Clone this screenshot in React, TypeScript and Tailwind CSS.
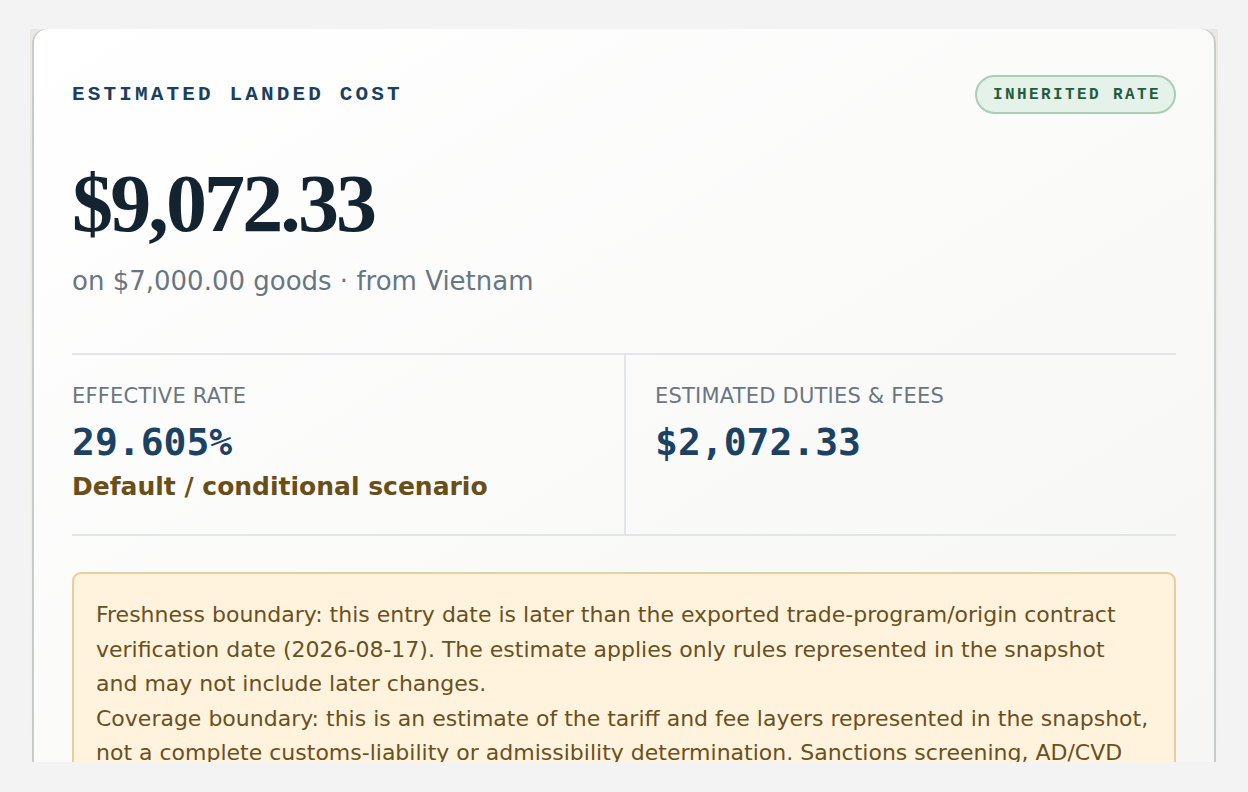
export default function App() {
  return (
    <div className="w-[1248px] h-[792px] bg-[#f2f3f2] pt-[29px] pl-[30px] overflow-hidden">
      <div className="w-[1188px] h-[733px] px-[2px] bg-linear-to-b from-[#ebe8e1] to-[#f2f3f2] overflow-hidden">
        <div className="h-full rounded-t-[14px] bg-linear-to-br from-white to-[#f6f6f5] shadow-[inset_2px_0_0_#c8cbcb,inset_-2px_0_0_#c8cbcb] px-[40px] pt-[46px] overflow-hidden">
          <div className="flex items-center justify-between h-[39px]">
            <div className="font-['Liberation_Mono',monospace] font-bold text-[21px] tracking-[0.15em] text-[#1b3f5e] leading-none">
              ESTIMATED LANDED COST
            </div>
            <div className="h-[39px] flex items-center rounded-full border-2 border-[#a9cdb7] bg-[#e5f2ea] pl-[16px] pr-[13px] font-['Liberation_Mono',monospace] font-bold text-[16px] tracking-[0.15em] text-[#245b40] leading-none">
              INHERITED RATE
            </div>
          </div>

          <div className="mt-[49px] font-['Liberation_Serif',serif] font-bold text-[82px] leading-none tracking-[-0.035em] text-[#13232f]">
            $9,072.33
          </div>
          <div className="mt-[18px] font-['DejaVu_Sans',sans-serif] text-[26px] leading-[36px] text-[#687681]">
            on $7,000.00 goods · from Vietnam
          </div>

          <div className="mt-[54px] grid grid-cols-[554px_1fr] border-t-2 border-b-2 border-[#e3e6e8]">
            <div className="pt-[27px] pb-[31px] border-r-2 border-[#e3e6e8]">
              <div className="font-['DejaVu_Sans',sans-serif] text-[21px] leading-[28px] tracking-[0.01em] text-[#6b7680]">
                EFFECTIVE RATE
              </div>
              <div className="mt-[10px] font-['DejaVu_Sans_Mono',monospace] font-bold text-[38px] leading-[44px] text-[#1b4263]">
                29.605%
              </div>
              <div className="mt-[7px] font-['DejaVu_Sans',sans-serif] font-bold text-[25px] leading-[32px] text-[#6a4e17]">
                Default / conditional scenario
              </div>
            </div>
            <div className="pt-[27px] pb-[31px] pl-[29px]">
              <div className="font-['DejaVu_Sans',sans-serif] text-[21px] leading-[28px] tracking-[0.01em] text-[#6b7680]">
                ESTIMATED DUTIES &amp; FEES
              </div>
              <div className="mt-[10px] font-['DejaVu_Sans_Mono',monospace] font-bold text-[38px] leading-[44px] text-[#1b4263]">
                $2,072.33
              </div>
            </div>
          </div>

          <div className="mt-[36px] rounded-[9px] border-2 border-[#e6cf9b] bg-[#fff3dd] px-[22px] pt-[24px] pb-[24px] font-['DejaVu_Sans',sans-serif] text-[22px] leading-[34.5px] text-[#6a5020]">
            <p>
              Freshness boundary: this entry date is later than the exported trade-program/origin contract
              verification date (2026-08-17). The estimate applies only rules represented in the snapshot
              and may not include later changes.
            </p>
            <p>
              Coverage boundary: this is an estimate of the tariff and fee layers represented in the snapshot,
              not a complete customs-liability or admissibility determination. Sanctions screening, AD/CVD
              cases, quota status and other agency requirements are not evaluated here.
            </p>
          </div>
        </div>
      </div>
    </div>
  );
}
